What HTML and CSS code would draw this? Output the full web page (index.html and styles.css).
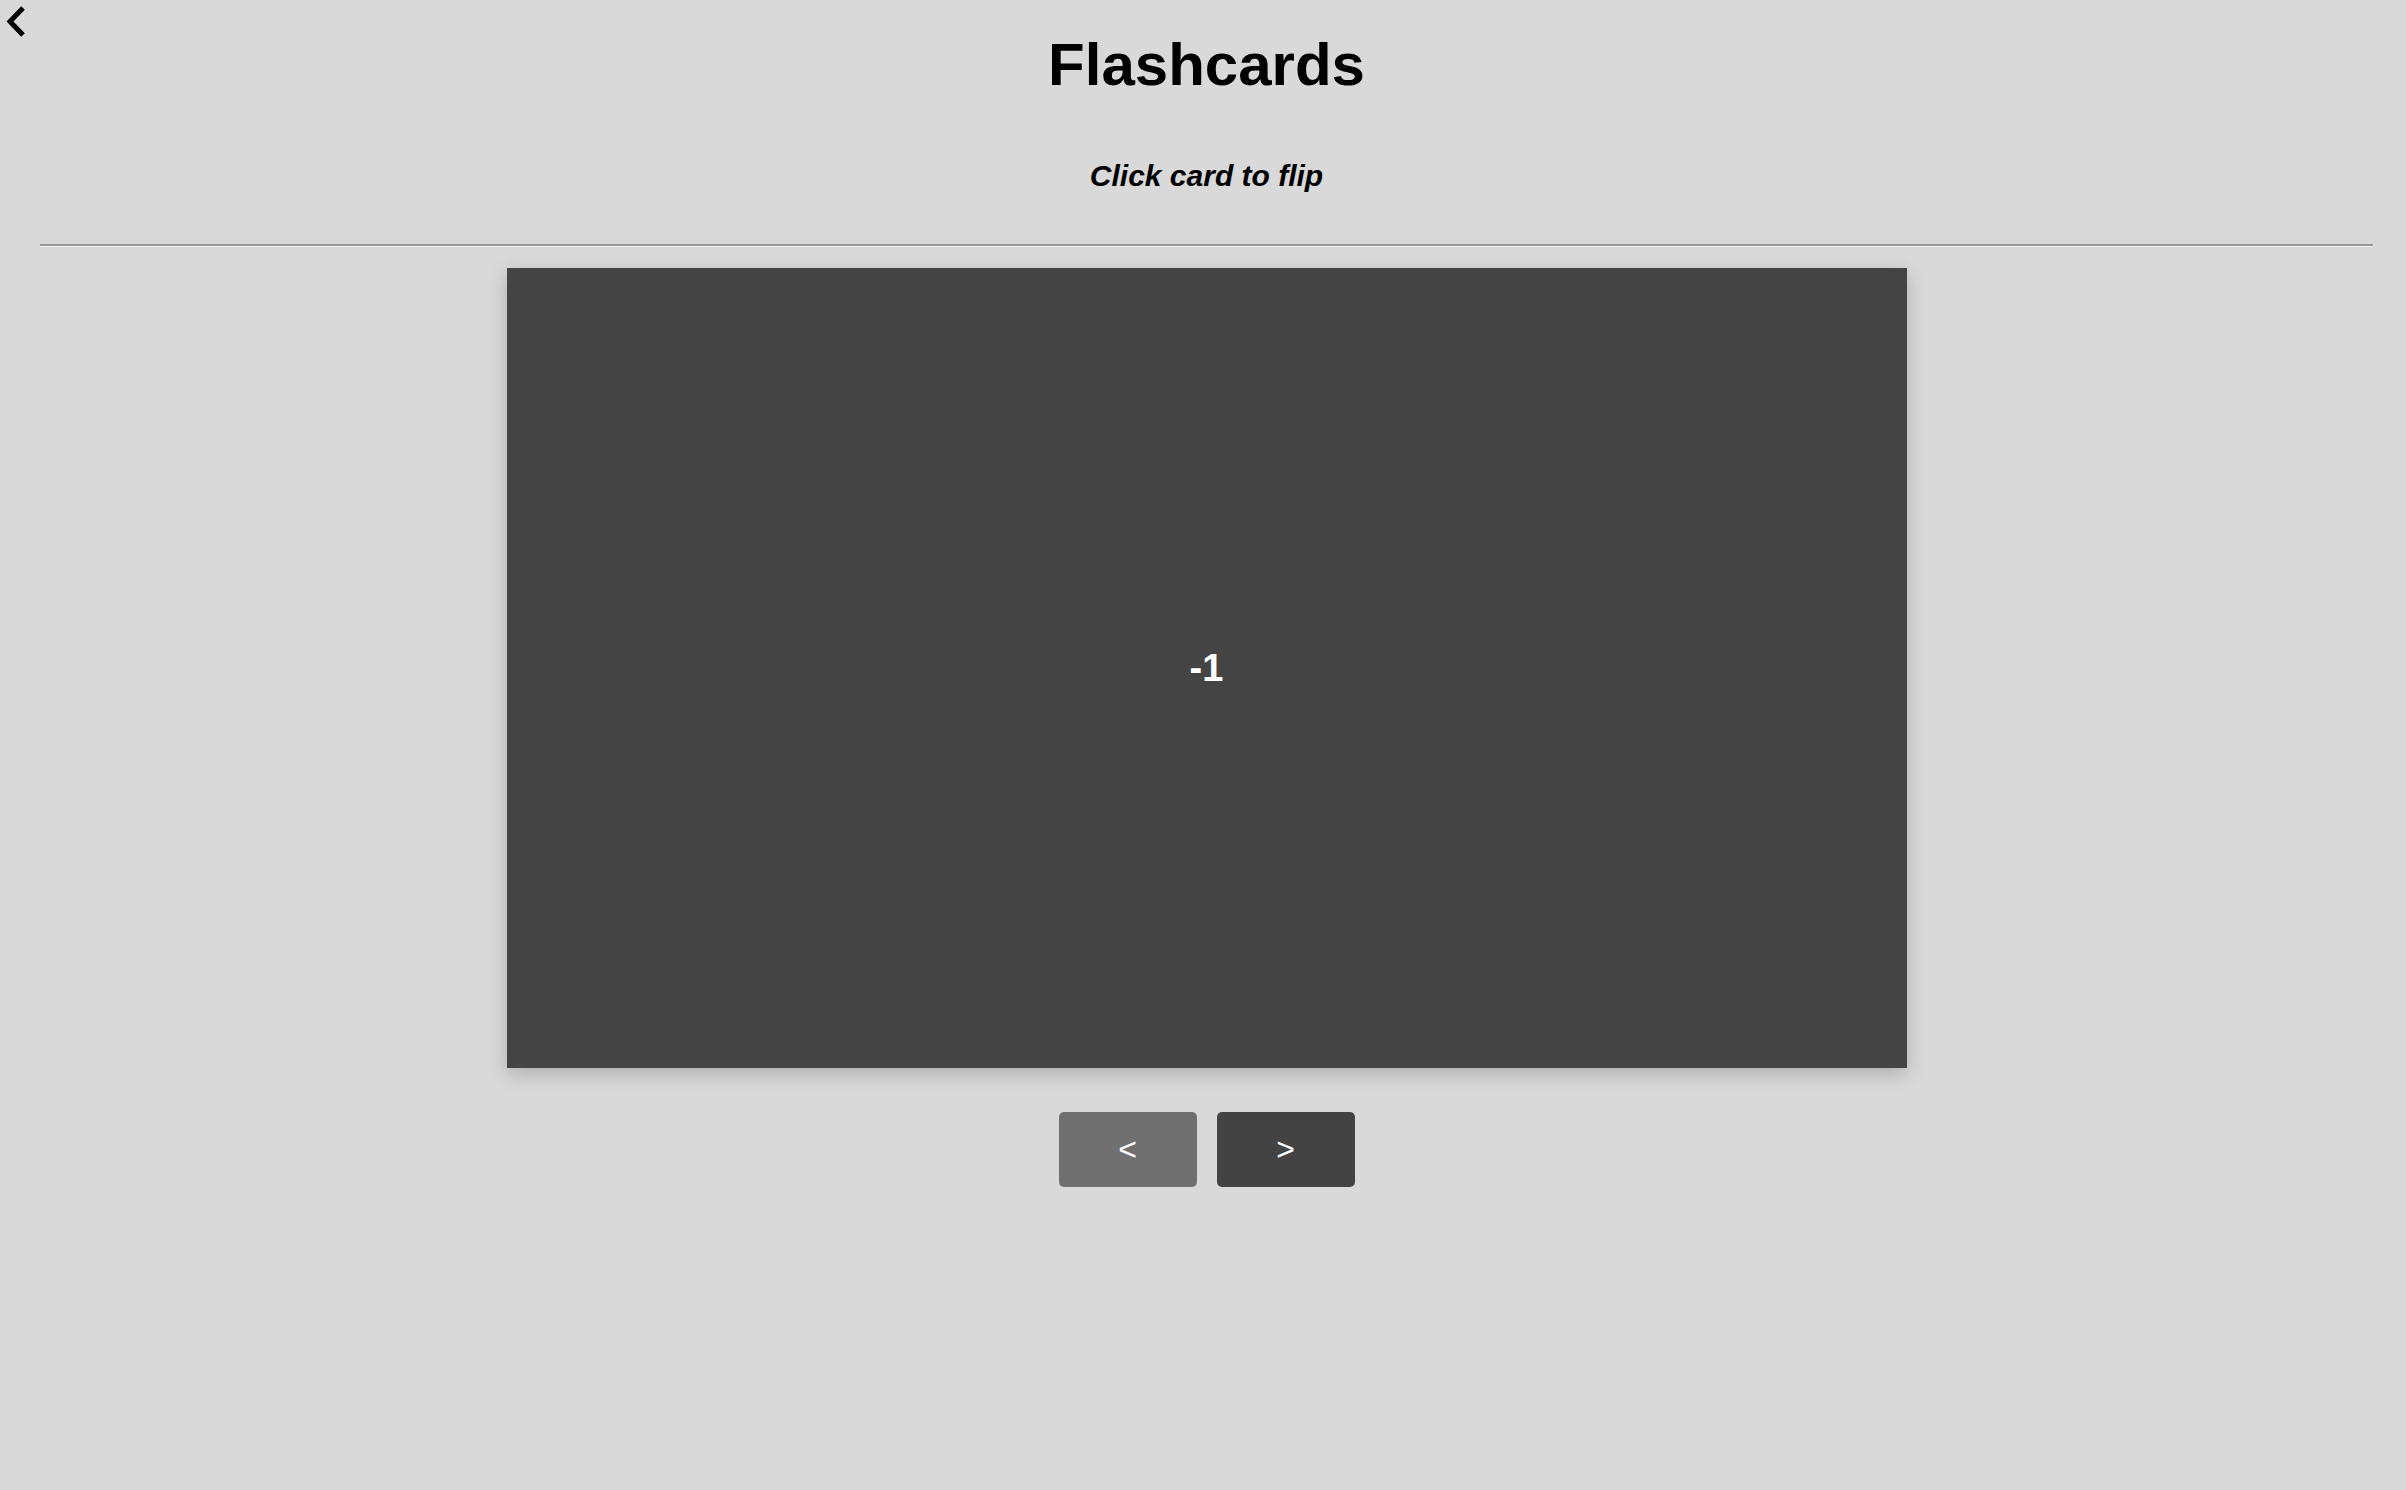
FILE: index.html
```html
<!DOCTYPE html>
<html>
<head>
<meta charset="utf-8">
<title>Flashcards</title>
<link rel="stylesheet" href="styles.css">
</head>
<body>
<a class="back" href="#" aria-label="Back">
  <svg width="32" height="42" viewBox="0 0 32 42"><polyline points="23,8 10,21.5 23,35" fill="none" stroke="#000" stroke-width="5" stroke-linecap="butt" stroke-linejoin="miter"/></svg>
</a>
<main class="page">
  <h1 class="title">Flashcards</h1>
  <p class="subtitle">Click card to flip</p>
  <hr class="divider">
  <div class="card"><span class="card-text">-1</span></div>
  <div class="nav">
    <button class="btn btn-prev">&lt;</button>
    <button class="btn btn-next">&gt;</button>
  </div>
</main>
</body>
</html>
```

FILE: styles.css
```css
html, body {
  margin: 0;
  padding: 0;
  background: #d9d9d9;
  font-family: "Liberation Sans", Arial, sans-serif;
}
body {
  min-height: 1490px;
  position: relative;
}
.back {
  position: absolute;
  left: 0;
  top: 0;
  display: block;
  width: 32px;
  height: 42px;
}
.back svg { display: block; }
.page {
  display: flex;
  flex-direction: column;
  align-items: center;
  padding: 30px 33px 0 40px;
}
.title {
  margin: 0;
  font-size: 60px;
  line-height: 69px;
  font-weight: 700;
  color: #000;
}
.subtitle {
  margin: 60px 0 0;
  font-size: 30px;
  line-height: 34px;
  font-weight: 700;
  font-style: italic;
  color: #000;
}
.divider {
  align-self: stretch;
  margin: 51px 0 0;
  height: 0;
  border: 0;
  border-top: 2px solid #999999;
  border-bottom: 1px solid #f2f2f2;
}
.card {
  margin-top: 21px;
  width: 1400px;
  height: 800px;
  background: #444444;
  box-shadow: 0 6px 18px rgba(0, 0, 0, 0.2);
  display: flex;
  align-items: center;
  justify-content: center;
}
.card-text {
  color: #fff;
  font-size: 38px;
  font-weight: 700;
}
.nav {
  margin-top: 44px;
  display: flex;
  gap: 20px;
}
.btn {
  width: 138px;
  height: 75px;
  border: 0;
  border-radius: 5px;
  color: #fff;
  font-family: "Liberation Sans", Arial, sans-serif;
  font-size: 32px;
  padding: 0;
}
.btn-prev { background: #707070; }
.btn-next { background: #434343; }
```
